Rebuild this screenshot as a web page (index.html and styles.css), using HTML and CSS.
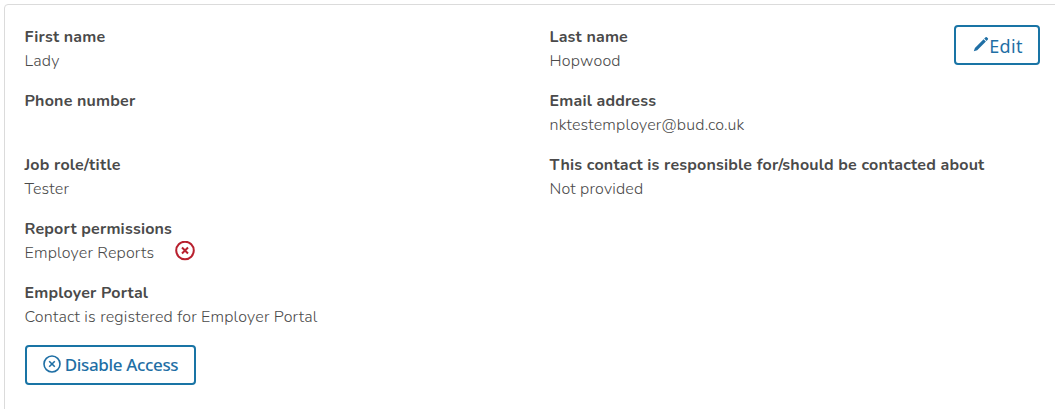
FILE: index.html
```html
<!DOCTYPE html>
<html lang="en">
<head>
    <meta charset="UTF-8">
    <meta name="viewport" content="width=device-width, initial-scale=1.0">
    <title>Contact details</title>
    <link rel="stylesheet" href="styles.css">
</head>
<body>

<div class="card">
    <div class="details">
        <div class="field">
            <div class="label">First name</div>
            <div class="value">Lady</div>
        </div>
        <div class="field">
            <div class="label">Last name</div>
            <div class="value">Hopwood</div>
        </div>
        <div class="field">
            <div class="label">Phone number</div>
            <div class="value"></div>
        </div>
        <div class="field">
            <div class="label">Email address</div>
            <div class="value">nktestemployer@bud.co.uk</div>
        </div>
        <div class="field">
            <div class="label">Job role/title</div>
            <div class="value">Tester</div>
        </div>
        <div class="field">
            <div class="label">This contact is responsible for/should be contacted about</div>
            <div class="value">Not provided</div>
        </div>
        <div class="field field-wide">
            <div class="label">Report permissions</div>
            <div class="value value-status">
                <span>Employer Reports</span>
                <svg class="icon-denied" viewBox="0 0 20 20">
                    <circle cx="10" cy="9.5" r="8.8"/>
                    <path d="M7 6.5l6 6M13 6.5l-6 6"/>
                </svg>
            </div>
        </div>
        <div class="field field-wide">
            <div class="label">Employer Portal</div>
            <div class="value">Contact is registered for Employer Portal</div>
        </div>
        <button class="btn btn-disable" type="button">
            <svg class="icon-disable" viewBox="0 0 18 18">
                <circle cx="9" cy="9" r="8"/>
                <path d="M6.2 6.2l5.6 5.6M11.8 6.2l-5.6 5.6"/>
            </svg>
            <span>Disable Access</span>
        </button>
    </div>
    <button class="btn btn-edit" type="button">
        <svg class="icon-edit" viewBox="0 0 16 16">
            <path d="M0.8 15.3L1.9 11.9 10.6 3.2 12.9 5.5 4.2 14.2zM11.2 2.6L12.6 1.2Q13.2 0.7 13.8 1.2L14.9 2.3Q15.4 2.9 14.9 3.5L13.5 4.9z"/>
        </svg>
        <span>Edit</span>
    </button>
</div>

</body>
</html>
```

FILE: styles.css
```css
body {
    margin: 0;
    height: 409px;
    overflow: hidden;
    background-color: #fff;
    color: #4a4a4a;
    font-family: "Nunito", "Noto Sans", sans-serif;
    font-size: 16px;
    line-height: 24px;
}

.card {
    box-sizing: border-box;
    display: flex;
    align-items: flex-start;
    justify-content: space-between;
    width: 1057px;
    height: 420px;
    margin: 4px 0 0 4px;
    padding: 20px;
    border: 1px solid #dbdbdb;
    border-radius: 4px;
}

.details {
    display: grid;
    grid-template-columns: 525px 400px;
    row-gap: 16px;
    margin-left: -0.5px;
    white-space: nowrap;
}

.field {
    height: 48px;
}

.field-wide {
    grid-column: 1 / -1;
}

.label {
    font-weight: 700;
    letter-spacing: 0.19px;
}

.value {
    font-weight: 300;
    letter-spacing: 0.19px;
}

.value-status {
    display: flex;
    gap: 21px;
}

.icon-denied {
    width: 20px;
    height: 20px;
    fill: none;
    stroke: #b8202e;
    stroke-width: 2;
}

.btn {
    box-sizing: border-box;
    display: flex;
    flex-shrink: 0;
    align-items: center;
    justify-content: center;
    height: 40px;
    padding: 0;
    border: 2px solid #1974a5;
    border-radius: 4px;
    background-color: #fff;
    color: #1f6fa5;
    font-family: "Noto Sans", sans-serif;
}

.btn-edit {
    width: 86px;
    padding: 1px 0 0 2px;
    font-size: 18px;
    letter-spacing: 0.3px;
}

.icon-edit {
    width: 16px;
    height: 16px;
    margin-top: -3px;
    fill: #1f6fa5;
}

.btn-disable {
    gap: 4px;
    width: 171px;
    margin-left: 0.5px;
    padding-bottom: 2px;
    font-size: 17px;
    font-weight: 500;
    letter-spacing: -0.35px;
}

.icon-disable {
    width: 18px;
    height: 18px;
    fill: none;
    stroke: #1f6fa5;
    stroke-width: 1.6;
}
```
